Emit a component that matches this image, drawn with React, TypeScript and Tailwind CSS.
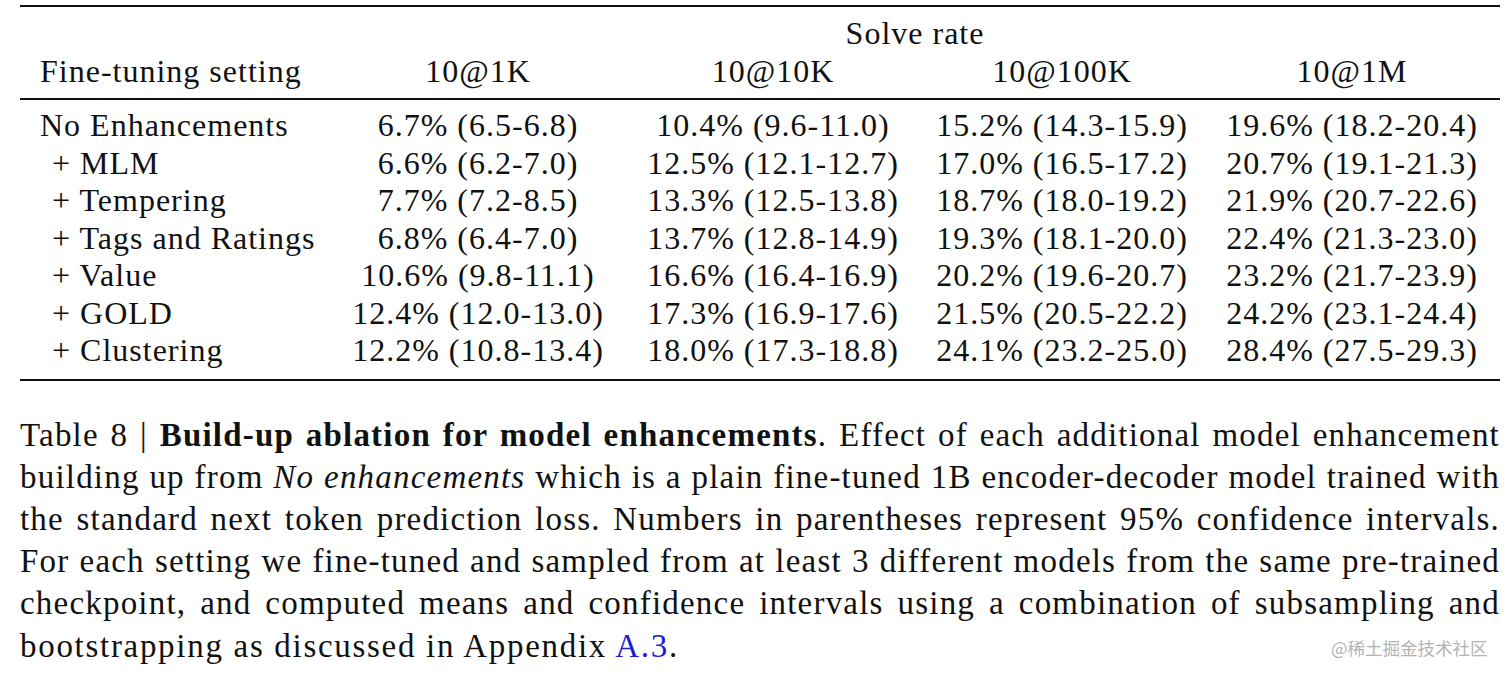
import React from 'react';

interface Row {
  label: string;
  sub: boolean;
  values: string[];
}

const rows: Row[] = [
  { label: 'No Enhancements', sub: false, values: ['6.7% (6.5-6.8)', '10.4% (9.6-11.0)', '15.2% (14.3-15.9)', '19.6% (18.2-20.4)'] },
  { label: '+ MLM', sub: true, values: ['6.6% (6.2-7.0)', '12.5% (12.1-12.7)', '17.0% (16.5-17.2)', '20.7% (19.1-21.3)'] },
  { label: '+ Tempering', sub: true, values: ['7.7% (7.2-8.5)', '13.3% (12.5-13.8)', '18.7% (18.0-19.2)', '21.9% (20.7-22.6)'] },
  { label: '+ Tags and Ratings', sub: true, values: ['6.8% (6.4-7.0)', '13.7% (12.8-14.9)', '19.3% (18.1-20.0)', '22.4% (21.3-23.0)'] },
  { label: '+ Value', sub: true, values: ['10.6% (9.8-11.1)', '16.6% (16.4-16.9)', '20.2% (19.6-20.7)', '23.2% (21.7-23.9)'] },
  { label: '+ GOLD', sub: true, values: ['12.4% (12.0-13.0)', '17.3% (16.9-17.6)', '21.5% (20.5-22.2)', '24.2% (23.1-24.4)'] },
  { label: '+ Clustering', sub: true, values: ['12.2% (10.8-13.4)', '18.0% (17.3-18.8)', '24.1% (23.2-25.0)', '28.4% (27.5-29.3)'] },
];

const budgets = ['10@1K', '10@10K', '10@100K', '10@1M'];

const cols = 'grid grid-cols-[310px_296px_294px_284px_296px]';

export default function App() {
  return (
    <div className="relative w-[1512px] h-[679px] bg-white text-[#111] font-['Liberation_Serif','Times_New_Roman',serif] overflow-hidden">
      {/* Tabel */}
      <div className="ml-[20px] w-[1480px] pt-[5px] text-[32px] tracking-[1px]">
        <div className="border-t-2 border-[#111]">
          <div className={`${cols} pt-[8px]`}>
            <div />
            <div className="col-span-4 text-center leading-[37px]">Solve rate</div>
          </div>
          <div className={`${cols} pb-[8px]`}>
            <div className="pl-[20px] leading-[38px]">Fine-tuning setting</div>
            {budgets.map((b) => (
              <div key={b} className="text-center leading-[38px]">{b}</div>
            ))}
          </div>
        </div>
        <div className="border-t-2 border-[#111] pt-[7px] pb-[9px]">
          {rows.map((row) => (
            <div key={row.label} className={cols}>
              <div className={`leading-[37.5px] whitespace-nowrap ${row.sub ? 'pl-[32px]' : 'pl-[20px]'}`}>
                {row.label}
              </div>
              {row.values.map((v, i) => (
                <div key={i} className="text-center leading-[37.5px] whitespace-nowrap">{v}</div>
              ))}
            </div>
          ))}
        </div>
        <div className="border-t-2 border-[#111]" />
      </div>

      {/* Caption */}
      <div className="ml-[20px] w-[1480px] mt-[33px] text-[33px] leading-[42.2px] tracking-[1.2px] text-justify">
        <div className="[text-align-last:justify] whitespace-nowrap">
          Table 8 | <span className="font-bold">Build-up ablation for model enhancements</span>. Effect of each additional model enhancement
        </div>
        <div className="[text-align-last:justify] whitespace-nowrap">
          building up from <span className="italic">No enhancements</span> which is a plain fine-tuned 1B encoder-decoder model trained with
        </div>
        <div className="[text-align-last:justify] whitespace-nowrap">
          the standard next token prediction loss. Numbers in parentheses represent 95% confidence intervals.
        </div>
        <div className="[text-align-last:justify] whitespace-nowrap">
          For each setting we fine-tuned and sampled from at least 3 different models from the same pre-trained
        </div>
        <div className="[text-align-last:justify] whitespace-nowrap">
          checkpoint, and computed means and confidence intervals using a combination of subsampling and
        </div>
        <div className="whitespace-nowrap tracking-[1.7px]">
          bootstrapping as discussed in Appendix <span className="text-[#1c1cd6]">A.3</span>.
        </div>
      </div>

      {/* Watermark */}
      <div className="absolute left-[1331px] top-[637px] text-[17.5px] leading-[22px] text-[#b3b3b3] font-['Noto_Sans_CJK_SC',sans-serif] tracking-[0px]">
        @稀土掘金技术社区
      </div>
    </div>
  );
}
